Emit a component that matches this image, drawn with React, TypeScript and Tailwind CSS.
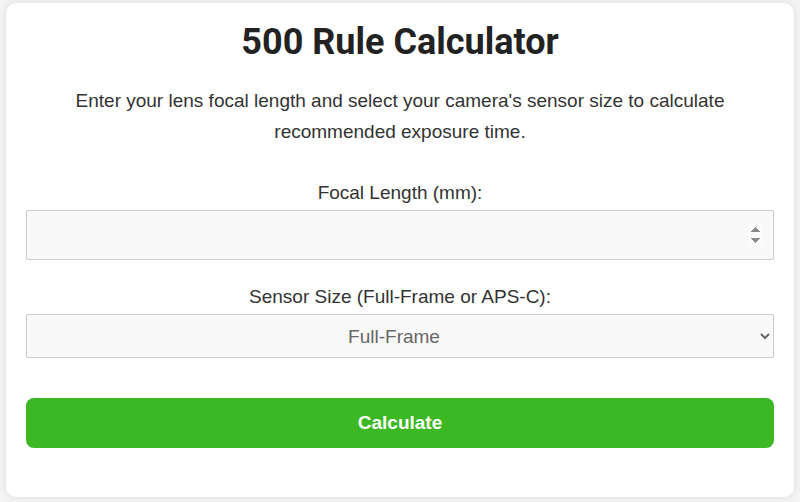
import { useState } from 'react';

export default function App() {
  const [focal, setFocal] = useState('');
  const [sensor, setSensor] = useState('full');

  return (
    <div className="min-h-screen bg-[#f4f4f4] px-[6px] pt-[3px] pb-[6px] font-['Liberation_Sans',Arial,sans-serif]">
      <div className="bg-white rounded-[10px] shadow-[0_0_8px_rgba(0,0,0,0.1)] px-5 pt-5 pb-[49px]">
        <h1 className="text-center font-['Roboto',sans-serif] font-bold text-[36px] leading-[38px] text-[#222]">
          500 Rule Calculator
        </h1>
        <p className="mt-6 text-center text-[19px] leading-[31px] text-[#333]">
          Enter your lens focal length and select your camera's sensor size to calculate recommended exposure time.
        </p>

        <label htmlFor="focal" className="block mt-[33px] text-center text-[19px] leading-[26px] text-[#333]">
          Focal Length (mm):
        </label>
        <input
          id="focal"
          type="number"
          value={focal}
          onChange={e => setFocal(e.target.value)}
          className="mt-1 block w-full h-[50px] px-2.5 py-2.5 bg-[#f9f9f9] border border-[#ccc] rounded-[2px] text-[19px] text-center [&::-webkit-inner-spin-button]:opacity-100"
        />

        <label htmlFor="sensor" className="block mt-[24px] text-center text-[19px] leading-[26px] text-[#333]">
          Sensor Size (Full-Frame or APS-C):
        </label>
        <select
          id="sensor"
          value={sensor}
          onChange={e => setSensor(e.target.value)}
          className="mt-1 block w-full h-[44px] px-2.5 bg-[#f9f9f9] border border-[#ccc] rounded-[2px] text-[19px] text-[#666] [text-align-last:center]"
        >
          <option value="full">Full-Frame</option>
          <option value="apsc">APS-C</option>
        </select>

        <button className="mt-[40px] block w-full h-[50px] rounded-lg bg-[#3bb824] text-white font-bold text-[19px]">
          Calculate
        </button>
      </div>
    </div>
  );
}
